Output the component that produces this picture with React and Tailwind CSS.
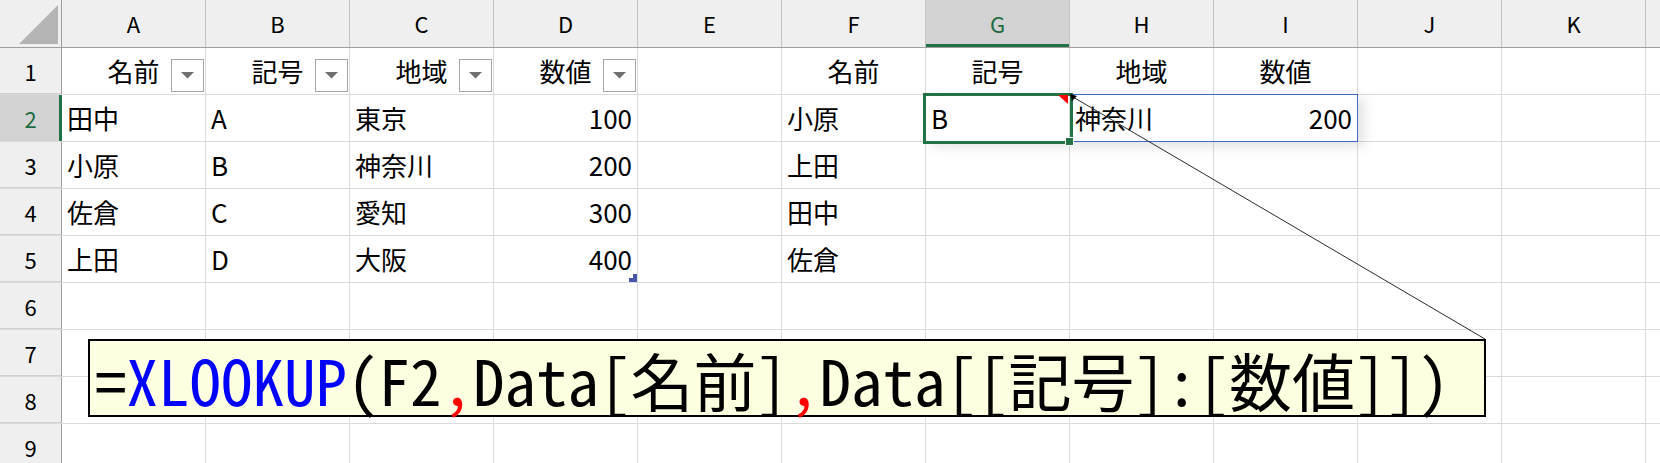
import React from 'react';

const COLS = ['A', 'B', 'C', 'D', 'E', 'F', 'G', 'H', 'I', 'J', 'K'];

// a: l = left, r = right, c = centered ; dd = table filter button
const data = {
  1: [
    { t: '名前', a: 'c', dd: true },
    { t: '記号', a: 'c', dd: true },
    { t: '地域', a: 'c', dd: true },
    { t: '数値', a: 'c', dd: true },
    null,
    { t: '名前', a: 'c' },
    { t: '記号', a: 'c' },
    { t: '地域', a: 'c' },
    { t: '数値', a: 'c' },
  ],
  2: [{ t: '田中' }, { t: 'A' }, { t: '東京' }, { t: '100', a: 'r' }, null, { t: '小原' }, { t: 'B' }, { t: '神奈川' }, { t: '200', a: 'r' }],
  3: [{ t: '小原' }, { t: 'B' }, { t: '神奈川' }, { t: '200', a: 'r' }, null, { t: '上田' }],
  4: [{ t: '佐倉' }, { t: 'C' }, { t: '愛知' }, { t: '300', a: 'r' }, null, { t: '田中' }],
  5: [{ t: '上田' }, { t: 'D' }, { t: '大阪' }, { t: '400', a: 'r' }, null, { t: '佐倉' }],
};

const FilterButton = () => (
  <div className="absolute right-[1px] bottom-[2px] w-[33px] h-[33px] border border-[#a6a6a6] bg-white flex items-center justify-center">
    <svg width="13" height="7" viewBox="0 0 13 7">
      <polygon points="0,0 13,0 6.5,6.5" fill="#6f6f6f" />
    </svg>
  </div>
);

const Cell = ({ cell }) => {
  const align =
    cell?.a === 'r' ? 'justify-end' : cell?.a === 'c' ? 'justify-center' : 'justify-start';
  return (
    <div className={`relative w-[144px] h-full shrink-0 border-r border-[#dadada] flex items-center px-[5px] ${align}`}>
      {cell && <span className="text-[26px] leading-none text-black whitespace-nowrap">{cell.t}</span>}
      {cell?.dd && <FilterButton />}
    </div>
  );
};

const ColumnHeader = () => (
  <div className="flex h-[48px] bg-[#efefef] border-b border-[#9e9e9e]">
    <div className="relative w-[62px] h-full shrink-0 border-r border-[#9e9e9e]">
      <svg className="absolute inset-0" width="61" height="47" viewBox="0 0 61 47">
        <polygon points="19,44 58,44 58,5" fill="#b4b4b4" />
      </svg>
    </div>
    {COLS.map((c) => (
      <div
        key={c}
        className={`w-[144px] h-full shrink-0 border-r border-[#c4c4c4] flex items-center justify-center text-[22px] ${
          c === 'G' ? 'bg-[#d2d2d2] text-[#1e6b41] shadow-[inset_0_-3px_0_#217346]' : 'text-black'
        }`}
      >
        {c}
      </div>
    ))}
    <div className="flex-1" />
  </div>
);

const Row = ({ n }) => {
  const cells = data[n] || [];
  const active = n === 2;
  return (
    <div className="flex h-[47px] border-b border-[#dadada]">
      <div
        className={`w-[62px] h-full shrink-0 border-r flex items-center justify-center text-[22px] ${
          active
            ? 'bg-[#d2d2d2] text-[#1e6b41] border-[#217346] shadow-[inset_-2px_0_0_#217346]'
            : 'bg-[#efefef] text-black border-[#9e9e9e] shadow-[inset_0_-1px_0_#d0d0d0]'
        }`}
      >
        {n}
      </div>
      {COLS.map((c, i) => (
        <Cell key={c} cell={cells[i]} />
      ))}
      <div className="flex-1" />
    </div>
  );
};

const Formula = () => (
  <div className="absolute left-[88px] top-[339px] w-[1398px] h-[78px] border-2 border-black bg-[#ffffe1] flex items-center pl-[5px]">
    <span className="font-['Noto_Sans_Mono_CJK_JP','Noto_Sans_CJK_JP',monospace] text-[63px] leading-none text-black whitespace-nowrap">
      =<span className="text-[#0000ff]">XLOOKUP</span>(F2<span className="text-[#ff0000]">,</span>Data[名前]
      <span className="text-[#ff0000]">,</span>Data[[記号]:[数値]])
    </span>
  </div>
);

export default function App() {
  return (
    <div className="relative w-[1660px] h-[463px] overflow-hidden bg-white font-['Noto_Sans_CJK_JP',sans-serif]">
      <ColumnHeader />
      {[1, 2, 3, 4, 5, 6, 7, 8, 9].map((n) => (
        <Row key={n} n={n} />
      ))}

      {/* spill range */}
      <div className="absolute left-[925px] top-[94px] w-[433px] h-[48px] border border-[#3d6cc4] shadow-[6px_4px_12px_rgba(0,0,0,0.12)]" />

      {/* active cell G2 */}
      <div className="absolute left-[923px] top-[93px] w-[150px] h-[51px] border-[3px] border-[#217346]" />
      <div className="absolute left-[1065px] top-[137px] w-[9px] h-[9px] bg-[#217346] border border-white" />

      {/* drawings: comment mark, table resize handle, callout leader */}
      <svg className="absolute inset-0 pointer-events-none" width="1660" height="463" viewBox="0 0 1660 463">
        <polygon points="1058,95 1068,95 1068,104" fill="#ff0000" />
        <polygon points="633,274 637,274 637,282 629,282 629,278 633,278" fill="#4756a8" />
        <line x1="1073" y1="97" x2="1485" y2="339" stroke="#2b2b2b" strokeWidth="1" />
        <polygon points="1070,94 1077,96 1072,101" fill="#000" />
      </svg>

      <Formula />
    </div>
  );
}
